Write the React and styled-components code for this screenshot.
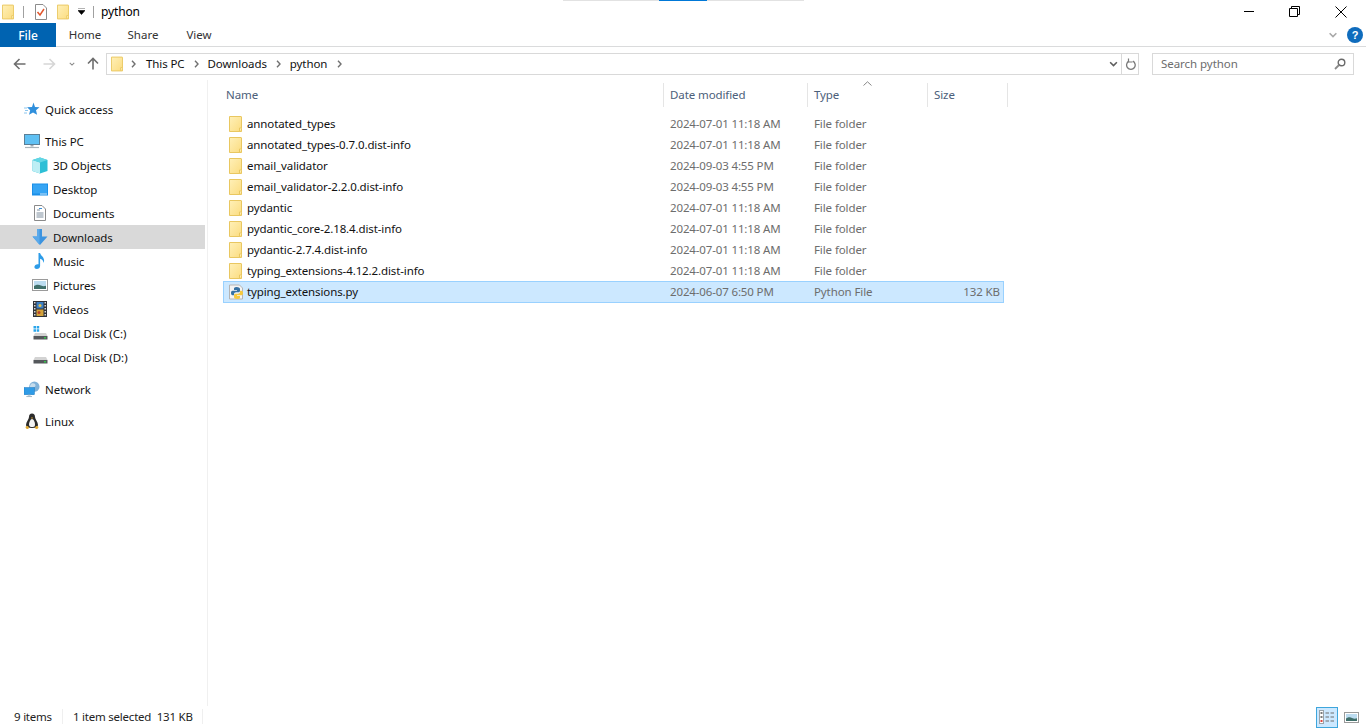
import React from "react";
import styled, { createGlobalStyle } from "styled-components";

const Global = createGlobalStyle`
  html, body { margin: 0; padding: 0; background: #fff; }
  body { font-family: "Noto Sans", "Open Sans", "Liberation Sans", sans-serif; font-size: 12px; color: #000; }
  * { box-sizing: border-box; }
`;

const Win = styled.div`
  position: relative; width: 1366px; height: 728px; overflow: hidden; background: #fff;
  display: flex; flex-direction: column;
`;
const Progress = styled.div`
  position: absolute; top: 0; left: 563px; width: 241px; height: 1px; background: #e2e2e2;
  &::after { content: ""; position: absolute; left: 96px; top: 0; width: 48px; height: 1px; background: #0078d7; }
`;
const TitleBar = styled.div`
  height: 23px; flex: none; display: flex; align-items: center; padding-left: 2px;
`;
const QSep = styled.div`
  width: 1px; height: 12px; background: #a0a0a0; margin: ${p => p.$m};
`;
const Spacer = styled.span`
  width: ${p => p.$w}px; flex: none;
`;
const TitleText = styled.span`
  font-size: 12px; margin-left: 7px; letter-spacing: -0.15px;
`;
const WinControls = styled.div`
  margin-left: auto; display: flex; align-items: center; padding-right: 19px; gap: 35px;
`;
const Ribbon = styled.div`
  height: 24px; flex: none; display: flex; align-items: stretch; border-bottom: 1px solid #dadbdc;
`;
const FileTab = styled.div`
  width: 56px; background: #0063b1; color: #fff; display: flex; align-items: center; justify-content: center;
  font-size: 12px; font-weight: 500; margin-bottom: -1px;
`;
const Tab = styled.div`
  width: ${p => p.$w}px; display: flex; align-items: center; justify-content: center; color: #333; font-size: 11.5px;
`;
const RibbonRight = styled.div`
  margin-left: auto; display: flex; align-items: center; gap: 9px; padding-right: 3px;
`;
const AddressRow = styled.div`
  height: 33px; flex: none; display: flex; align-items: center; position: relative; padding-left: 13px;
`;
const NavArrows = styled.div`
  width: 93px; flex: none; display: flex; align-items: center; height: 21px;
`;
const AddrBox = styled.div`
  width: 1033px; height: 22px; border: 1px solid #d9d9d9; display: flex; align-items: center; padding-left: 4px;
`;
const Crumb = styled.span`
  font-size: 11.5px; color: #111; letter-spacing: -0.1px; margin: 0 ${p => p.$r}px 0 ${p => p.$l}px;
`;
const AddrEnd = styled.div`
  margin-left: auto; display: flex; align-items: center; height: 100%;
`;
const AddrBtn = styled.div`
  width: ${p => p.$w}px; height: 100%; display: flex; align-items: center; justify-content: center;
  border-left: ${p => (p.$sep ? "1px solid #d9d9d9" : "none")};
`;
const SearchBox = styled.div`
  width: 202px; height: 22px; margin-left: 13px; border: 1px solid #d9d9d9; display: flex; align-items: center;
  justify-content: space-between; padding: 0 7px 0 8px; color: #6d6d6d; font-size: 11.5px; letter-spacing: -0.05px;
`;
const Body = styled.div`
  flex: 1; display: flex; min-height: 0;
`;
const Side = styled.nav`
  width: 208px; flex: none; border-right: 1px solid #f0f0f0; padding-top: 17px;
`;
const SideRow = styled.div`
  width: 205px; height: 24px; display: flex; align-items: center; gap: ${p => p.$d ? 6 : 5}px; padding-left: ${p => p.$d ? 32 : 24}px;
  margin-top: ${p => p.$gap || 0}px; background: ${p => (p.$sel ? "#d9d9d9" : "transparent")};
  font-size: 11.5px; color: #111; letter-spacing: -0.05px;
`;
const IconSlot = styled.span`
  width: 16px; height: 16px; flex: none; display: flex; align-items: center; justify-content: center;
  margin-right: ${p => p.$d ? -1 : 0}px;
`;
const Main = styled.main`
  flex: 1; min-width: 0; padding: 3px 0 0 15px; position: relative;
`;
const Head = styled.div`
  display: grid; grid-template-columns: 441px 144px 120px 80px; height: 24px; margin-bottom: 6px; width: 785px; position: relative;
`;
const HeadCell = styled.div`
  padding-left: ${p => p.$first ? 3 : 6}px; padding-bottom: 2px; display: flex; align-items: center; font-size: 11.5px; color: #4c607a;
  border-right: 1px solid #e5e5e5; position: relative; letter-spacing: -0.1px;
`;
const SortCaret = styled.svg`
  position: absolute; left: 55px; top: -2px;
`;
const Row = styled.div`
  display: grid; grid-template-columns: 441px 144px 120px 76px; width: 781px; height: ${p => p.$sel ? 22 : 21}px; align-items: center;
  padding-bottom: ${p => p.$sel ? 1 : 0}px;
  background: ${p => (p.$sel ? "#cce8ff" : "transparent")};
  box-shadow: ${p => (p.$sel ? "inset 0 0 0 1px #99d1ff" : "none")};
`;
const NameCell = styled.div`
  display: flex; align-items: center; gap: 5px; padding-left: 6px; font-size: 11.5px; color: #111; letter-spacing: -0.11px;
`;
const PyName = styled.span`
  margin-left: -3px;
`;
const DimCell = styled.div`
  padding-left: 6px; font-size: 11.5px; color: #6d6d6d; letter-spacing: ${p => p.$date ? -0.14 : -0.1}px; text-align: ${p => p.$right ? "right" : "left"};
  padding-right: ${p => p.$right ? 4 : 0}px;
`;
const Status = styled.div`
  height: 22px; flex: none; display: flex; align-items: center; font-size: 11.5px; color: #222; padding-left: 14px; position: relative; margin-top: auto; letter-spacing: -0.22px; padding-bottom: 1px;
`;
const StatusSep = styled.div`
  width: 1px; height: 15px; background: #efefef; margin: ${p => p.$m};
`;
const ViewBtns = styled.div`
  margin-left: auto; display: flex; align-items: center; padding-right: 4px; gap: 2px; margin-bottom: -1px;
`;
const ViewBtn = styled.div`
  width: 22px; height: 21px; display: flex; align-items: center; justify-content: center;
  background: ${p => p.$on ? "#cce8ff" : "transparent"}; border: ${p => p.$on ? "1px solid #3ea6dc" : "none"};
`;

const Folder = ({ w = 13, h = 16 }) => (
  <svg width={w} height={h} viewBox="0 0 13 16">
    <defs>
      <linearGradient id="fg" x1="0" x2="1" y1="0" y2="1">
        <stop offset="0" stopColor="#fff0b8" />
        <stop offset="1" stopColor="#fbdc80" />
      </linearGradient>
    </defs>
    <path d="M.5.5h11.500a.5.5 0 0 1 .5.5v14.500H.5z" fill="url(#fg)" stroke="#e9c760" />
    <path d="M10.500 15.500v-3.500h2" fill="#fff3c4" stroke="#e9c760" />
  </svg>
);
const Chev = ({ c = "#707070" }) => (
  <svg width="5" height="8" viewBox="0 0 5 8"><path d="M1 .8 4 4 1 7.200" fill="none" stroke={c} strokeWidth="1.400" /></svg>
);
const ArrowL = ({ c }) => (
  <svg width="13" height="12" viewBox="0 0 13 12"><path d="M12.500 6H1.800M6.500 1 1.500 6l5 5" fill="none" stroke={c} strokeWidth="1.600" /></svg>
);
const ArrowR = ({ c }) => (
  <svg width="13" height="12" viewBox="0 0 13 12"><path d="M.5 6h10.700M6.500 1l5 5-5 5" fill="none" stroke={c} strokeWidth="1.600" /></svg>
);
const ArrowU = ({ c }) => (
  <svg width="12" height="13" viewBox="0 0 12 13"><path d="M6 12.500V1.800M1 6.500l5-5 5 5" fill="none" stroke={c} strokeWidth="1.600" /></svg>
);
const DownSmall = ({ c = "#7a7a7a", w = 7, h = 5 }) => (
  <svg width={w} height={h} viewBox="0 0 7 5"><path d="M.7 1 3.500 3.800 6.300 1" fill="none" stroke={c} strokeWidth="1.300" /></svg>
);

const Star = () => (
  <svg width="16" height="16" viewBox="0 0 16 16">
    <path d="M9.500 1.500 11 6l4.500.3-3.500 2.900 1.100 4.600L9 11.400l-4 2.400 1.200-4.600L3 6.300 8 6z" fill="#2f8fdc" />
    <path d="M0 7h3M1 9.500h3M0 12h3" stroke="#8cc6ee" strokeWidth="1" />
  </svg>
);
const Monitor = () => (
  <svg width="16" height="16" viewBox="0 0 16 16">
    <rect x=".5" y="1.500" width="15" height="10" fill="#5fc0f3" stroke="#5b7f96" />
    <path d="M6.500 12h3v1.500h-3z" fill="#9aa8b2" /><path d="M1 14.500h14" stroke="#a9b4bb" strokeWidth="1.200" />
  </svg>
);
const Cube = () => (
  <svg width="16" height="17" viewBox="0 0 16 17">
    <path d="M8 .5 15.500 3v11L8 16.500.5 14V3z" fill="#2dbfd6" />
    <path d="M.5 3 8 5.500v11L.5 14z" fill="#bdeef4" />
    <path d="M8 .5 15.500 3 8 5.500.5 3z" fill="#62d6e4" />
  </svg>
);
const Desktop = () => (
  <svg width="16" height="13" viewBox="0 0 16 13">
    <rect width="16" height="12" y=".5" fill="#1b8fe8" /><rect x="1" y="1.500" width="14" height="9" fill="#36a5f4" />
    <path d="M8 11h7" stroke="#cfe9fb" />
  </svg>
);
const Docs = () => (
  <svg width="12" height="16" viewBox="0 0 12 16">
    <path d="M.5.5h7.500l3.500 3.500v11.500H.5z" fill="#fff" stroke="#8a8a8a" />
    <path d="M3 5h3M2.500 8h7M2.500 10h7M2.500 12h7" stroke="#7f8f9f" />
    <path d="M5 3.500h3" stroke="#3a8fd8" />
  </svg>
);
const Download = () => (
  <svg width="16" height="16" viewBox="0 0 16 16">
    <path d="M5 0h5v7.500h5.500L8 16 .5 7.500H5z" fill="#3d94e0" />
    <path d="M5 0h2.500v16L.5 7.500H5z" fill="#5aa9ea" />
  </svg>
);
const Music = () => (
  <svg width="12" height="16" viewBox="0 0 12 16">
    <path d="M4.500 0h1.600c.3 2.500 4 3.800 4 7.500 0 1-.3 1.700-.8 2.400.2-2.500-1.400-3.600-3.200-4.200V13c0 1.700-1.500 3-3.300 3C1.300 16 .4 15.200.4 14c0-1.600 1.600-2.800 3.300-2.800.3 0 .6 0 .8.100z" fill="#2d9ce8" />
  </svg>
);
const Pic = () => (
  <svg width="16" height="12" viewBox="0 0 16 12">
    <rect x=".5" y=".5" width="15" height="11" fill="#fff" stroke="#9a9a9a" />
    <rect x="2" y="2" width="12" height="8" fill="#bcdcf0" />
    <path d="M2 7c3-2 5-1.500 7-.5 2 .8 3 .8 5 .3V10H2z" fill="#3f6f6a" />
  </svg>
);
const Film = () => (
  <svg width="14" height="16" viewBox="0 0 14 16">
    <rect width="14" height="16" fill="#2f3238" />
    <path d="M1 1h1.500v1.500H1zM1 4h1.500v1.500H1zM1 7h1.500v1.500H1zM1 10h1.500v1.500H1zM1 13h1.500v1.500H1zM11.500 1H13v1.500h-1.500zM11.500 4H13v1.500h-1.500zM11.500 7H13v1.500h-1.500zM11.500 10H13v1.500h-1.500zM11.500 13H13v1.500h-1.500z" fill="#d8d8d8" />
    <rect x="3.500" y="1" width="7" height="6.500" fill="#3c7fc4" /><rect x="3.500" y="8.500" width="7" height="6.500" fill="#d2a23a" />
    <circle cx="7" cy="4.500" r="1.500" fill="#e3c14b" /><circle cx="6" cy="11.500" r="1.500" fill="#b6452d" />
  </svg>
);
const Disk = ({ win }) => (
  <svg width="15" height="14" viewBox="0 0 15 14">
    {win && <path d="M.5 0h2.500v2.500H.5zM3.700 0h2.500v2.500H3.700zM.5 3.200h2.500v2.500H.5zM3.700 3.200h2.500v2.500H3.700z" fill="#2aa5ea" />}
    <path d="M2 7h11l1.500 3h-14z" fill="#d3d3d3" />
    <rect x=".5" y="10" width="14" height="3.500" fill="#55585c" />
    <rect x="11" y="11" width="2" height="1.500" fill="#36c24a" />
  </svg>
);
const Net = () => (
  <svg width="17" height="17" viewBox="0 0 17 17">
    <circle cx="11" cy="5.500" r="5.500" fill="#7fb1d8" /><path d="M8 2c3-1 5 1 4 3s-3 1-4 3-3-4 0-6z" fill="#c6dcec" />
    <rect x="0" y="6.500" width="11" height="7.500" fill="#2f9be6" stroke="#1d7cc4" strokeWidth=".6" />
    <path d="M4 14.500h3M2.500 16h6" stroke="#9db3c2" />
  </svg>
);
const Tux = () => (
  <svg width="14" height="17" viewBox="0 0 14 17">
    <path d="M7 .5c2 0 3 1.500 3 3.500 0 2 3 5 3 8 0 2-2 3-6 3s-6-1-6-3c0-3 3-6 3-8 0-2 1-3.500 3-3.500z" fill="#2b2b2b" />
    <path d="M7 6c1.500 0 3 3 3 5.500S8.500 14 7 14s-3-.500-3-2.500S5.500 6 7 6z" fill="#f4f4f4" />
    <path d="M6 4.500h2L7 6z" fill="#e0a830" />
    <path d="M.5 14c1-1.500 3-1.500 3.500 1-.8 1.500-3 1.500-3.500-1zM13.500 14c-1-1.500-3-1.500-3.500 1 .8 1.500 3 1.500 3.500-1z" fill="#e0a830" />
  </svg>
);
const PyFile = () => (
  <svg width="16" height="16" viewBox="0 0 16 16">
    <path d="M.5 1h10l3 3v11H.5z" fill="#f4f4f4" stroke="#b4b4b4" />
    <path d="M7.500 3C5 3 5 4 5 5v1h3v.7H3.500C2.300 6.700 2 8 2 9s.4 2.300 1.500 2.300H5V10c0-1 1-1.700 2-1.700h2.500c1 0 1.500-.7 1.500-1.500V5c0-1-1-2-3.500-2z" fill="#3672a4" />
    <path d="M8.500 15c2.500 0 2.500-1 2.500-2v-1H8v-.7h4.500c1.200 0 1.500-1.300 1.500-2.300s-.4-2.300-1.500-2.300H11V8c0 1-1 1.700-2 1.700H6.500C5.500 9.700 5 10.400 5 11.200V13c0 1 1 2 3.500 2z" fill="#f6c93e" />
  </svg>
);
const Checkdoc = () => (
  <svg width="12" height="16" viewBox="0 0 12 16">
    <path d="M.5.5h7.500l3.500 3.500v11.500H.5z" fill="#fff" stroke="#8c8c8c" />
    <path d="M2.500 8 5 11l4-6" fill="none" stroke="#e2562c" strokeWidth="1.500" />
  </svg>
);

const sideTop = [
  { l: "3D Objects", I: Cube },
  { l: "Desktop", I: Desktop },
  { l: "Documents", I: Docs },
  { l: "Downloads", I: Download, sel: true },
  { l: "Music", I: Music },
  { l: "Pictures", I: Pic },
  { l: "Videos", I: Film },
  { l: "Local Disk (C:)", I: () => <Disk win /> },
  { l: "Local Disk (D:)", I: () => <Disk /> },
];
const files = [
  ["annotated_types", "2024-07-01 11:18 AM"],
  ["annotated_types-0.7.0.dist-info", "2024-07-01 11:18 AM"],
  ["email_validator", "2024-09-03 4:55 PM"],
  ["email_validator-2.2.0.dist-info", "2024-09-03 4:55 PM"],
  ["pydantic", "2024-07-01 11:18 AM"],
  ["pydantic_core-2.18.4.dist-info", "2024-07-01 11:18 AM"],
  ["pydantic-2.7.4.dist-info", "2024-07-01 11:18 AM"],
  ["typing_extensions-4.12.2.dist-info", "2024-07-01 11:18 AM"],
];

export default function App() {
  return (
    <Win>
      <Global />
      <Progress />
      <TitleBar>
        <Folder w={12} h={16} />
        <QSep $m="0 11px 0 9px" />
        <Checkdoc />
        <Spacer $w={10} />
        <Folder w={12} h={16} />
        <Spacer $w={9} />
        <svg width="7" height="7" viewBox="0 0 7 7"><path d="M0 0h7M0 2.500h7L3.500 6.500z" fill="#000" stroke="#000" strokeWidth=".6" /></svg>
        <QSep $m="0 0 0 8px" />
        <TitleText>python</TitleText>
        <WinControls>
          <svg width="10" height="1" viewBox="0 0 10 1"><path d="M0 .5h10" stroke="#000" /></svg>
          <svg width="11" height="11" viewBox="0 0 11 11"><path d="M.5 2.500h8v8h-8zM2.500 2.500v-2h8v8h-2" fill="none" stroke="#000" /></svg>
          <svg width="12" height="12" viewBox="0 0 12 12"><path d="M.5.5l11 11M11.500.5l-11 11" stroke="#000" /></svg>
        </WinControls>
      </TitleBar>
      <Ribbon>
        <FileTab>File</FileTab>
        <Tab $w={58}>Home</Tab>
        <Tab $w={58}>Share</Tab>
        <Tab $w={54}>View</Tab>
        <RibbonRight>
          <DownSmall c="#a8a8a8" w={10} h={6} />
          <svg width="16" height="16" viewBox="0 0 16 16" style={{ overflow: "visible" }}>
            <circle cx="8" cy="8" r="8" fill="#0f6cbd" />
            <text x="8" y="12" fontSize="11" fontWeight="700" fill="#fff" textAnchor="middle" fontFamily="Liberation Sans, sans-serif">?</text>
          </svg>
        </RibbonRight>
      </Ribbon>
      <AddressRow>
        <NavArrows>
          <ArrowL c="#6e6e6e" />
          <Spacer $w={17} />
          <ArrowR c="#d6d6d6" />
          <Spacer $w={13} />
          <DownSmall c="#8a8a8a" w={6} h={4} />
          <Spacer $w={12} />
          <ArrowU c="#6e6e6e" />
        </NavArrows>
        <AddrBox>
          <Folder w={12} h={16} />
          <Spacer $w={8} />
          <Chev />
          <Crumb $l={10} $r={9}>This PC</Crumb>
          <Chev />
          <Crumb $l={9} $r={9}>Downloads</Crumb>
          <Chev />
          <Crumb $l={9} $r={10}>python</Crumb>
          <Chev />
          <AddrEnd>
            <AddrBtn $w={16}><DownSmall c="#5e5e5e" w={9} h={6} /></AddrBtn>
            <AddrBtn $w={17} $sep>
              <svg width="11" height="12" viewBox="0 0 11 12"><path d="M7.800 3.200A4.300 4.300 0 1 1 4 3.200" fill="none" stroke="#7a7a7a" strokeWidth="1.300" /><path d="M3.500 .5v3.500h4" fill="none" stroke="#7a7a7a" strokeWidth="1.200" /></svg>
            </AddrBtn>
          </AddrEnd>
        </AddrBox>
        <SearchBox>
          Search python
          <svg width="12" height="12" viewBox="0 0 12 12"><circle cx="7.500" cy="4.500" r="3.300" fill="none" stroke="#6a6a6a" strokeWidth="1.400" /><path d="M5 7 1 11" stroke="#8a8a8a" strokeWidth="1.800" /></svg>
        </SearchBox>
      </AddressRow>
      <Body>
        <Side>
          <SideRow><IconSlot><Star /></IconSlot>Quick access</SideRow>
          <SideRow $gap={8}><IconSlot><Monitor /></IconSlot>This PC</SideRow>
          {sideTop.map(({ l, I, sel }) => (
            <SideRow key={l} $d $sel={sel}><IconSlot $d><I /></IconSlot>{l}</SideRow>
          ))}
          <SideRow $gap={8}><IconSlot><Net /></IconSlot>Network</SideRow>
          <SideRow $gap={8}><IconSlot><Tux /></IconSlot>Linux</SideRow>
        </Side>
        <Main>
          <Head>
            <HeadCell $first>Name</HeadCell>
            <HeadCell>Date modified</HeadCell>
            <HeadCell>
              Type
              <SortCaret width="9" height="5" viewBox="0 0 9 5"><path d="M.5 4.500 4.500.8l4 3.700" fill="none" stroke="#888" /></SortCaret>
            </HeadCell>
            <HeadCell>Size</HeadCell>
          </Head>
          {files.map(([n, d]) => (
            <Row key={n}>
              <NameCell><Folder />{n}</NameCell>
              <DimCell $date>{d}</DimCell>
              <DimCell>File folder</DimCell>
              <DimCell />
            </Row>
          ))}
          <Row $sel>
            <NameCell><PyFile /><PyName>typing_extensions.py</PyName></NameCell>
            <DimCell $date>2024-06-07 6:50 PM</DimCell>
            <DimCell>Python File</DimCell>
            <DimCell $right>132 KB</DimCell>
          </Row>
        </Main>
      </Body>
      <Status>
        9 items
        <StatusSep $m="0 10px 0 10px" />
        1 item selected&nbsp;&nbsp;131 KB
        <StatusSep $m="0 0 0 9px" />
        <ViewBtns>
          <ViewBtn $on>
            <svg width="16" height="14" viewBox="0 0 16 14">
              <rect x=".5" y=".5" width="4" height="13" fill="#fff" stroke="#9aa3aa" />
              <path d="M1.500 2h2v2h-2zM1.500 6h2v2h-2z" fill="#7a7a7a" /><path d="M1.500 10h2v2h-2z" fill="#e2453c" />
              <path d="M6.500 3H10M11.500 3H15M6.500 7H10M11.500 7H15M6.500 11H10M11.500 11H15" stroke="#6f6f6f" />
            </svg>
          </ViewBtn>
          <ViewBtn>
            <svg width="15" height="11" viewBox="0 0 15 11">
              <rect x=".5" y=".5" width="14" height="10" fill="#fff" stroke="#9a9a9a" />
              <rect x="2" y="2" width="11" height="7" fill="#bcdcf0" />
              <path d="M2 6.500c3-2 5-1 6-.5 2 .8 3 .8 5 .3V9H2z" fill="#3f6f6a" />
            </svg>
          </ViewBtn>
        </ViewBtns>
      </Status>
    </Win>
  );
}
